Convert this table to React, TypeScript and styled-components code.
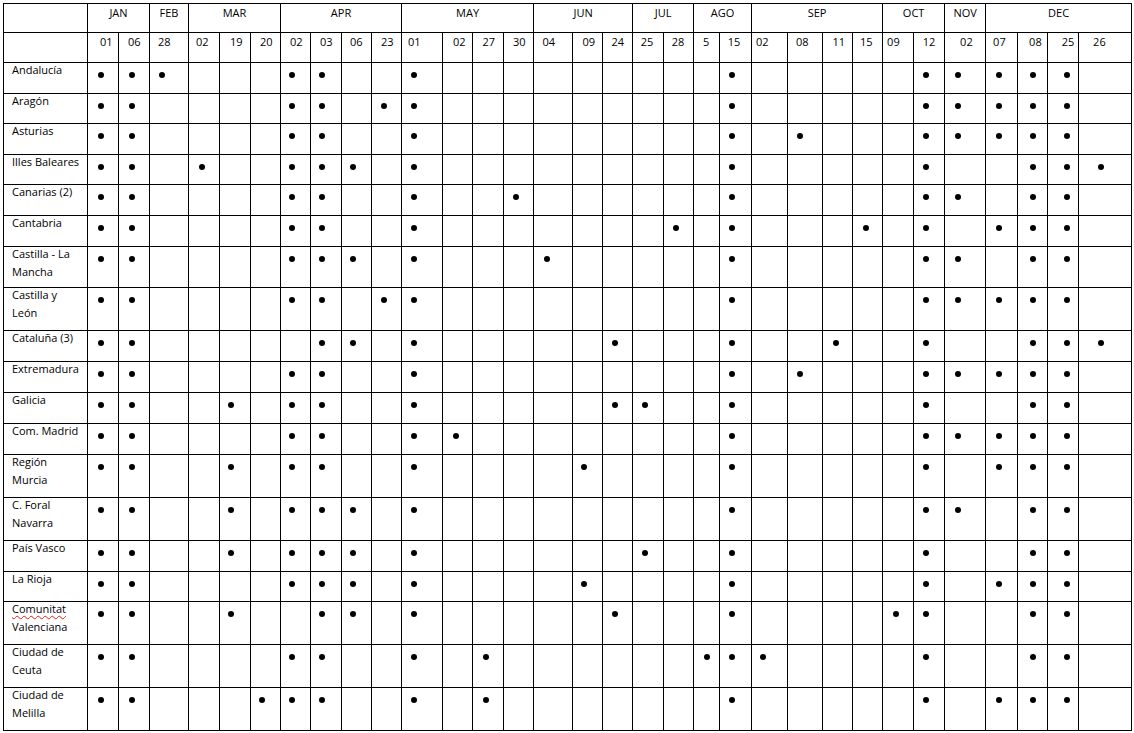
import { Fragment } from "react";
import styled, { createGlobalStyle } from "styled-components";

const GlobalStyle = createGlobalStyle`
  body {
    margin: 0;
    background: #ffffff;
    font-family: "Open Sans", "Liberation Sans", sans-serif;
    color: #000000;
  }
`;

const Page = styled.div`
  padding: 3px 0 0 3px;
`;

const Grid = styled.table`
  border-collapse: collapse;
  table-layout: fixed;
  width: 1129px;
  font-size: 11px;
  line-height: 18px;
`;

const Col = styled.col<{ $w: number }>`
  width: ${(props) => props.$w}px;
`;

const Row = styled.tr<{ $h: number }>`
  height: ${(props) => props.$h}px;
`;

const Cell = styled.td`
  border: 1px solid #000000;
  padding: 0;
  vertical-align: top;
  white-space: nowrap;
  overflow: hidden;
`;

const MonthCell = styled(Cell).attrs({ as: "th" })`
  font-weight: 400;
  text-align: center;
`;

const DayCell = styled(Cell)<{ $pad: number }>`
  padding-left: ${(props) => props.$pad - 1}px;
`;

const LabelCell = styled(Cell)`
  padding-left: 8px;
`;

const Label = styled.div`
  margin-top: -2px;
`;

const Misspelled = styled.span`
  text-decoration: underline wavy #e0201b;
  text-decoration-thickness: 1px;
  text-underline-offset: 2px;
`;

const Dot = styled.span<{ $dx: number }>`
  display: block;
  width: 6px;
  height: 6px;
  border-radius: 50%;
  background: #000000;
  margin-top: 8.5px;
  margin-left: ${(props) => props.$dx - 3.5}px;
`;

const months = [
  { name: "JAN", span: 2 },
  { name: "FEB", span: 1 },
  { name: "MAR", span: 3 },
  { name: "APR", span: 4 },
  { name: "MAY", span: 4 },
  { name: "JUN", span: 3 },
  { name: "JUL", span: 2 },
  { name: "AGO", span: 2 },
  { name: "SEP", span: 4 },
  { name: "OCT", span: 2 },
  { name: "NOV", span: 1 },
  { name: "DEC", span: 4 },
];

// day label, column width, text offset, dot offset
const days = [
  { day: "01", w: 31, tx: 13, dx: 13 },
  { day: "06", w: 31, tx: 10, dx: 13.5 },
  { day: "28", w: 39, tx: 9, dx: 12.7 },
  { day: "02", w: 31, tx: 8, dx: 13 },
  { day: "19", w: 31, tx: 11, dx: 11.5 },
  { day: "20", w: 30, tx: 10, dx: 11.7 },
  { day: "02", w: 30, tx: 10, dx: 11.7 },
  { day: "03", w: 31, tx: 10, dx: 11.7 },
  { day: "06", w: 30, tx: 9, dx: 11 },
  { day: "23", w: 30, tx: 10, dx: 12.3 },
  { day: "01", w: 41, tx: 7, dx: 12.3 },
  { day: "02", w: 30, tx: 11, dx: 13.7 },
  { day: "27", w: 31, tx: 10.5, dx: 13.7 },
  { day: "30", w: 30, tx: 10, dx: 12.7 },
  { day: "04", w: 39, tx: 9.5, dx: 13.7 },
  { day: "09", w: 30, tx: 10.5, dx: 11.3 },
  { day: "24", w: 30, tx: 9.5, dx: 12.3 },
  { day: "25", w: 31, tx: 8.7, dx: 12.3 },
  { day: "28", w: 30, tx: 8.7, dx: 12.7 },
  { day: "5", w: 26, tx: 10, dx: 13.7 },
  { day: "15", w: 32, tx: 8.7, dx: 12.7 },
  { day: "02", w: 36, tx: 5, dx: 11.5 },
  { day: "08", w: 35, tx: 9, dx: 12 },
  { day: "11", w: 30, tx: 10.5, dx: 13 },
  { day: "15", w: 30, tx: 8, dx: 13.7 },
  { day: "09", w: 31, tx: 5, dx: 13 },
  { day: "12", w: 31, tx: 9.7, dx: 12.7 },
  { day: "02", w: 41, tx: 16, dx: 13 },
  { day: "07", w: 32, tx: 8, dx: 13 },
  { day: "08", w: 30, tx: 12, dx: 15.7 },
  { day: "25", w: 31, tx: 14.7, dx: 19.7 },
  { day: "26", w: 53, tx: 15, dx: 22 },
];

const regions = [
  { label: ["Andalucía"], h: 31, dots: [1, 2, 3, 7, 8, 11, 21, 27, 28, 29, 30, 31] },
  { label: ["Aragón"], h: 30, dots: [1, 2, 7, 8, 10, 11, 21, 27, 28, 29, 30, 31] },
  { label: ["Asturias"], h: 31, dots: [1, 2, 7, 8, 11, 21, 23, 27, 28, 29, 30, 31] },
  { label: ["Illes Baleares"], h: 30, dots: [1, 2, 4, 7, 8, 9, 11, 21, 27, 30, 31, 32] },
  { label: ["Canarias (2)"], h: 31, dots: [1, 2, 7, 8, 11, 14, 21, 27, 28, 30, 31] },
  { label: ["Cantabria"], h: 31, dots: [1, 2, 7, 8, 11, 19, 21, 25, 27, 29, 30, 31] },
  { label: ["Castilla - La", "Mancha"], h: 41, dots: [1, 2, 7, 8, 9, 11, 15, 21, 27, 28, 30, 31] },
  { label: ["Castilla y", "León"], h: 43, dots: [1, 2, 7, 8, 10, 11, 21, 27, 28, 29, 30, 31] },
  { label: ["Cataluña (3)"], h: 31, dots: [1, 2, 8, 9, 11, 17, 21, 24, 27, 30, 31, 32] },
  { label: ["Extremadura"], h: 31, dots: [1, 2, 7, 8, 11, 21, 23, 27, 28, 29, 30, 31] },
  { label: ["Galicia"], h: 31, dots: [1, 2, 5, 7, 8, 11, 17, 18, 21, 27, 30, 31] },
  { label: ["Com. Madrid"], h: 31, dots: [1, 2, 7, 8, 11, 12, 21, 27, 28, 29, 30, 31] },
  { label: ["Región", "Murcia"], h: 43, dots: [1, 2, 5, 7, 8, 11, 16, 21, 27, 29, 30, 31] },
  { label: ["C. Foral", "Navarra"], h: 43, dots: [1, 2, 5, 7, 8, 9, 11, 21, 27, 28, 30, 31] },
  { label: ["País Vasco"], h: 31, dots: [1, 2, 5, 7, 8, 9, 11, 18, 21, 27, 30, 31] },
  { label: ["La Rioja"], h: 30, dots: [1, 2, 7, 8, 9, 11, 16, 21, 27, 29, 30, 31] },
  { label: ["Comunitat", "Valenciana"], h: 43, dots: [1, 2, 5, 8, 9, 11, 17, 21, 26, 27, 30, 31], typo: true },
  { label: ["Ciudad de", "Ceuta"], h: 43, dots: [1, 2, 7, 8, 11, 13, 20, 21, 22, 27, 30, 31] },
  { label: ["Ciudad de", "Melilla"], h: 43, dots: [1, 2, 6, 7, 8, 11, 13, 21, 27, 29, 30, 31] },
];

const App = () => {
  return (
    <Page>
      <GlobalStyle />
      <Grid>
        <colgroup>
          <Col $w={84} />
          {days.map((d, i) => (
            <Col key={i} $w={d.w} />
          ))}
        </colgroup>
        <thead>
          <Row $h={29}>
            <Cell />
            {months.map((m) => (
              <MonthCell key={m.name} colSpan={m.span}>
                {m.name}
              </MonthCell>
            ))}
          </Row>
          <Row $h={30}>
            <Cell />
            {days.map((d, i) => (
              <DayCell key={i} $pad={d.tx}>
                {d.day}
              </DayCell>
            ))}
          </Row>
        </thead>
        <tbody>
          {regions.map((r) => (
            <Row key={r.label.join(" ")} $h={r.h}>
              <LabelCell>
                <Label>
                  {r.label.map((line, i) => (
                    <Fragment key={line}>
                      {i > 0 && <br />}
                      {r.typo && i === 0 ? <Misspelled>{line}</Misspelled> : line}
                    </Fragment>
                  ))}
                </Label>
              </LabelCell>
              {days.map((d, i) => (
                <Cell key={i}>{r.dots.includes(i + 1) && <Dot $dx={d.dx} />}</Cell>
              ))}
            </Row>
          ))}
        </tbody>
      </Grid>
    </Page>
  );
};

export default App;
